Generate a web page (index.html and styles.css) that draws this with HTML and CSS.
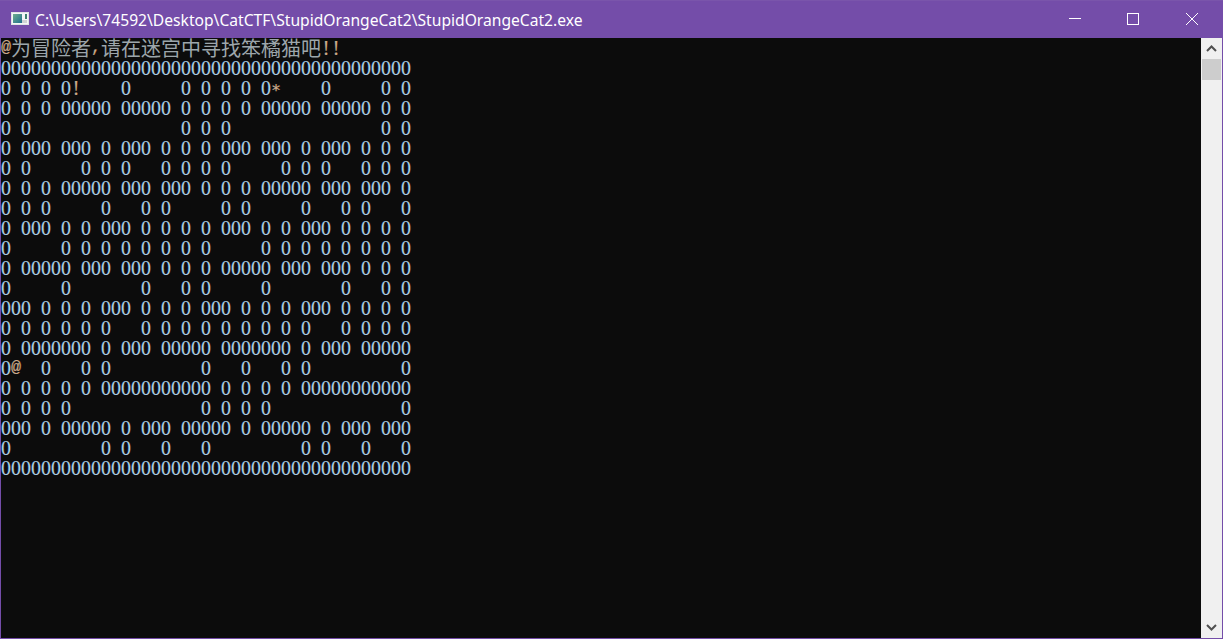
FILE: index.html
```html
<!DOCTYPE html>
<html lang="zh">
<head>
<meta charset="utf-8">
<title>StupidOrangeCat2</title>
<link rel="stylesheet" href="styles.css">
</head>
<body>
<div class="window">
  <header class="titlebar">
    <svg class="app-icon" width="18" height="13" viewBox="0 0 18 13">
      <defs><linearGradient id="g" x1="0" y1="0" x2="1" y2="1"><stop offset="0" stop-color="#6fae8c"/><stop offset="1" stop-color="#1f6f8f"/></linearGradient></defs>
      <rect x="0" y="0" width="18" height="13" fill="#dfe4e4"/>
      <rect x="1" y="1" width="16" height="11" fill="#f4f6f6"/>
      <rect x="2" y="2" width="9" height="9" fill="url(#g)"/>
      <rect x="14" y="2" width="2" height="5" fill="#3f7f70"/>
      <rect x="11" y="8" width="5" height="3" fill="#d0d4d4"/>
    </svg>
    <span class="title">C:\Users\74592\Desktop\CatCTF\StupidOrangeCat2\StupidOrangeCat2.exe</span>
    <div class="controls">
      <span class="ctl"><svg width="12" height="12" viewBox="0 0 12 12"><path d="M0 5.5H12" stroke="#fff" fill="none"/></svg></span>
      <span class="ctl"><svg width="12" height="12" viewBox="0 0 12 12"><rect x="0.5" y="0.5" width="11" height="11" stroke="#fff" fill="none"/></svg></span>
      <span class="ctl ctl-close"><svg width="12" height="12" viewBox="0 0 12 12"><path d="M0 0L12 12M12 0L0 12" stroke="#fff" fill="none"/></svg></span>
    </div>
  </header>
  <div class="body">
    <main class="console">
<div class="row"><span class="ch warm">@</span><span class="cjk">为冒险者</span><span class="ch warm">,</span><span class="cjk">请在迷宫中寻找笨橘猫吧</span><span class="ch bang warm">!</span><span class="ch bang warm">!</span></div>
<div class="row">00000000000000000000000000000000000000000</div>
<div class="row">0 0 0 0<span class="ch bang warm">!</span>    0     0 0 0 0 0<span class="ch star warm">*</span>    0     0 0</div>
<div class="row">0 0 0 00000 00000 0 0 0 0 00000 00000 0 0</div>
<div class="row">0 0               0 0 0               0 0</div>
<div class="row">0 000 000 0 000 0 0 0 000 000 0 000 0 0 0</div>
<div class="row">0 0     0 0 0   0 0 0 0     0 0 0   0 0 0</div>
<div class="row">0 0 0 00000 000 000 0 0 0 00000 000 000 0</div>
<div class="row">0 0 0     0   0 0     0 0     0   0 0   0</div>
<div class="row">0 000 0 0 000 0 0 0 0 000 0 0 000 0 0 0 0</div>
<div class="row">0     0 0 0 0 0 0 0 0     0 0 0 0 0 0 0 0</div>
<div class="row">0 00000 000 000 0 0 0 00000 000 000 0 0 0</div>
<div class="row">0     0       0   0 0     0       0   0 0</div>
<div class="row">000 0 0 0 000 0 0 0 000 0 0 0 000 0 0 0 0</div>
<div class="row">0 0 0 0 0 0   0 0 0 0 0 0 0 0 0   0 0 0 0</div>
<div class="row">0 0000000 0 000 00000 0000000 0 000 00000</div>
<div class="row">0<span class="ch warm">@</span>  0   0 0         0   0   0 0         0</div>
<div class="row">0 0 0 0 0 00000000000 0 0 0 0 00000000000</div>
<div class="row">0 0 0 0             0 0 0 0             0</div>
<div class="row">000 0 00000 0 000 00000 0 00000 0 000 000</div>
<div class="row">0         0 0   0   0         0 0   0   0</div>
<div class="row">00000000000000000000000000000000000000000</div>
    </main>
    <aside class="scrollbar">
      <svg class="arrow" width="21" height="21" viewBox="0 0 21 21"><path d="M6 13L10.5 8.5L15 13" stroke="#505050" stroke-width="2" fill="none"/></svg>
      <div class="thumb"></div>
      <div class="track"></div>
      <svg class="arrow" width="21" height="21" viewBox="0 0 21 21"><path d="M6 8L10.5 12.5L15 8" stroke="#505050" stroke-width="2" fill="none"/></svg>
    </aside>
  </div>
</div>
</body>
</html>
```
FILE: styles.css
```css
* { box-sizing: border-box; }
html, body { margin: 0; padding: 0; background: #0c0c0c; overflow: hidden; }
.window {
  width: 1223px;
  height: 639px;
  display: flex;
  flex-direction: column;
  border: 1px solid #744da9;
  border-top: 0;
}
.titlebar {
  height: 38px;
  flex: none;
  background: #744da9;
  border-top: 1px solid #7a55ab;
  margin: 0 -1px;
  display: flex;
  align-items: center;
  padding-left: 11px;
  color: #fff;
}
.app-icon { flex: none; align-self: flex-start; margin: 11px 6px 0 0; }
.title {
  font-family: "Noto Sans", "Open Sans", sans-serif;
  font-size: 15.63px;
  white-space: pre;
}
.controls { margin-left: auto; align-self: flex-start; display: flex; padding-right: 1px; }
.ctl {
  width: 58px;
  height: 36px;
  display: flex;
  align-items: center;
  justify-content: center;
}
.ctl-close { width: 60px; }
.body { flex: 1; display: flex; min-height: 0; }
.console {
  flex: 1;
  background: #0c0c0c;
  font-family: "Liberation Serif", serif;
  font-size: 20px;
  color: #a9cde0;
  text-shadow: -0.4px 0 rgba(40,140,255,.3), 0.4px 0 rgba(220,60,20,.25);
}
.row {
  height: 20px;
  line-height: 20px;
  white-space: pre;
  word-spacing: 5px;
}
.ch {
  display: inline-block;
  width: 10px;
  text-align: center;
  font-family: "Liberation Mono", monospace;
  font-size: 16.67px;
  line-height: 20px;
  height: 20px;
  vertical-align: top;
}
.bang { font-family: "Liberation Serif", serif; font-size: 20px; }
.star { font-family: "DejaVu Sans Mono", monospace; font-size: 16.6px; line-height: 25px; }
.warm { color: #c8aa8c; text-shadow: -0.4px 0 rgba(90,140,200,.3), 0.4px 0 rgba(230,110,20,.4); }
.cjk {
  font-family: "Noto Sans CJK SC", sans-serif;
  font-size: 20px;
  line-height: 20px;
  height: 20px;
  display: inline-block;
  vertical-align: top;
  color: #9da6ab;
  text-shadow: none;
  word-spacing: 0;
}
.scrollbar {
  width: 21px;
  flex: none;
  background: #f0f0f0;
  display: flex;
  flex-direction: column;
  align-items: center;
}
.arrow { flex: none; }
.thumb { width: 19px; height: 21px; background: #cdcdcd; flex: none; }
.track { flex: 1; }
```
